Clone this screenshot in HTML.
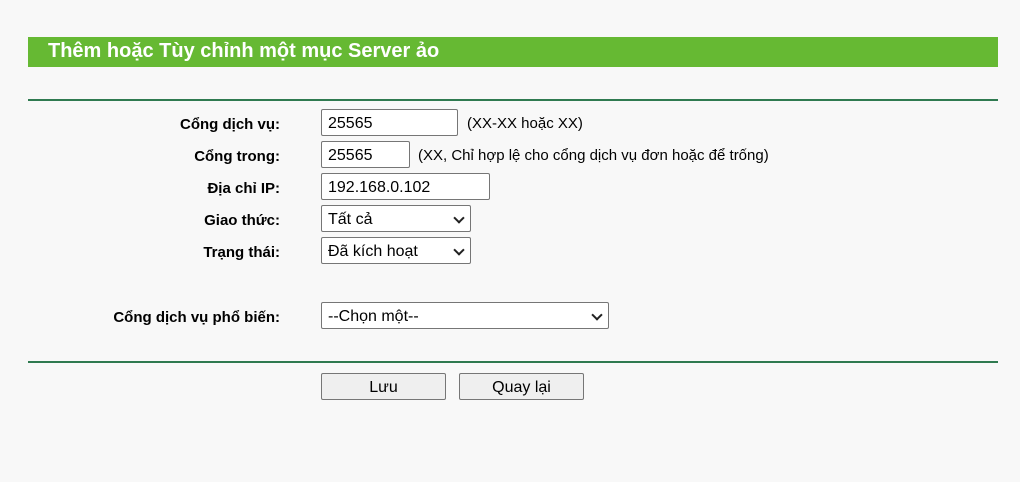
<!DOCTYPE html><html><head><meta charset="utf-8"><style>
body{margin:0;background:#f8f8f8;font-family:"Liberation Sans",Arial,sans-serif;width:1020px;height:482px;position:relative;overflow:hidden}
.a{position:absolute}
.bar{left:28px;top:37px;width:970px;height:30px;background:#66b933;color:#fff;font-weight:bold;font-size:20px;line-height:29px;box-sizing:border-box;padding-left:20px}
.hr{left:28px;width:970px;height:2px;background:#2f7a50}
.lb{right:740px;font-weight:bold;font-size:15px;color:#000;line-height:16px}
.in{background:#fff;border:1px solid #767676;border-radius:2px;box-sizing:border-box;font-size:16px;line-height:27px;padding-left:6px;color:#000}
.sel::after{content:"";position:absolute;right:7px;top:8px;width:6px;height:6px;border-right:2px solid #222;border-bottom:2px solid #222;transform:rotate(45deg)}
.hint{font-size:15px;line-height:16px;color:#000}
.btn{background:#efefef;border:1px solid #767676;border-radius:2px;box-sizing:border-box;font-size:16px;text-align:center;line-height:27px;height:27px;width:125px;top:373px}
</style></head><body>
<div class="a bar">Thêm hoặc Tùy chỉnh một mục Server ảo</div>
<div class="a hr" style="top:99px"></div>
<div class="a lb" style="top:117px">Cổng dịch vụ:</div>
<div class="a lb" style="top:149px">Cổng trong:</div>
<div class="a lb" style="top:181px">Địa chỉ IP:</div>
<div class="a lb" style="top:213px">Giao thức:</div>
<div class="a lb" style="top:245px">Trạng thái:</div>
<div class="a lb" style="top:310px">Cổng dịch vụ phổ biến:</div>
<div class="a in" style="left:321px;top:109px;width:137px;height:27px">25565</div>
<div class="a hint" style="left:467px;top:116px">(XX-XX hoặc XX)</div>
<div class="a in" style="left:321px;top:141px;width:89px;height:27px">25565</div>
<div class="a hint" style="left:418px;top:148px">(XX, Chỉ hợp lệ cho cổng dịch vụ đơn hoặc để trống)</div>
<div class="a in" style="left:321px;top:173px;width:169px;height:27px">192.168.0.102</div>
<div class="a in sel" style="left:321px;top:205px;width:150px;height:27px">Tất cả</div>
<div class="a in sel" style="left:321px;top:237px;width:150px;height:27px">Đã kích hoạt</div>
<div class="a in sel" style="left:321px;top:302px;width:288px;height:27px">--Chọn một--</div>
<div class="a hr" style="top:361px"></div>
<div class="a btn" style="left:321px">Lưu</div>
<div class="a btn" style="left:459px">Quay lại</div>
</body></html>
